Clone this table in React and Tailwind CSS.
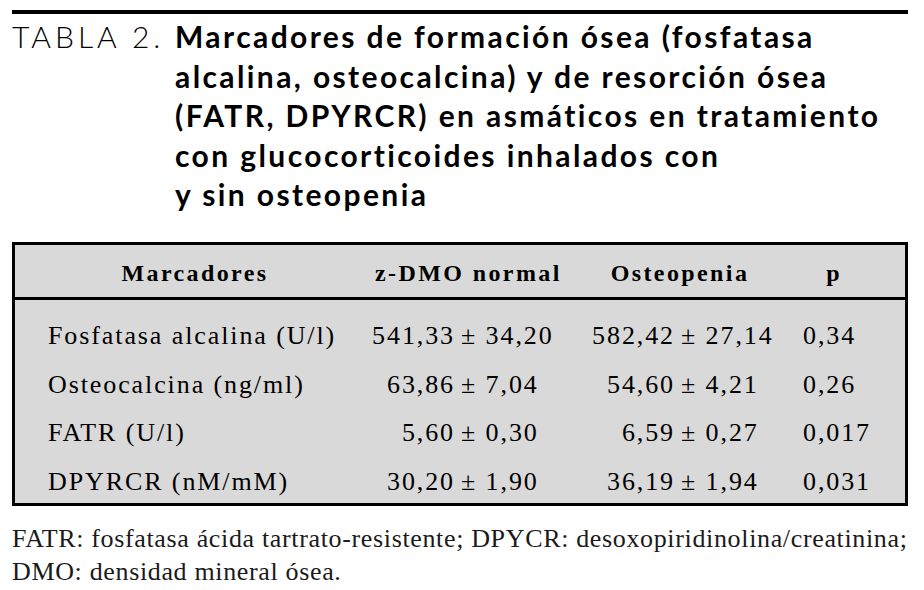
import React from "react";

const rows = [
  { label: "Fosfatasa alcalina (U/l)", a: "541,33", b: "34,20", c: "582,42", d: "27,14", p: "0,34" },
  { label: "Osteocalcina (ng/ml)", a: "63,86", b: "7,04", c: "54,60", d: "4,21", p: "0,26" },
  { label: "FATR (U/l)", a: "5,60", b: "0,30", c: "6,59", d: "0,27", p: "0,017" },
  { label: "DPYRCR (nM/mM)", a: "30,20", b: "1,90", c: "36,19", d: "1,94", p: "0,031" },
];

const serif = "font-['Liberation_Serif','Times_New_Roman',serif]";

const App = () => {
  return (
    <div className="w-[924px] h-[590px] bg-white text-black overflow-hidden">
      {/* top rule */}
      <div className="ml-[12px] mt-[10px] w-[896px] h-[4px] bg-black" />

      {/* title */}
      <div className="flex pl-[12px] pt-[3px] font-['Lato','Open_Sans',sans-serif] text-[30px] leading-[39.5px]">
        <span className="w-[163px] shrink-0 font-light tracking-[4px]">TABLA 2.</span>
        <h1 className="font-bold tracking-[2.4px]">
          Marcadores de formación ósea (fosfatasa
          <br />
          alcalina, osteocalcina) y de resorción ósea
          <br />
          (FATR, DPYRCR) en asmáticos en tratamiento
          <br />
          con glucocorticoides inhalados con
          <br />y sin osteopenia
        </h1>
      </div>

      {/* table */}
      <div className={`ml-[12px] mt-[27px] w-[896px] border-[3px] border-black bg-[#d9d9d9] ${serif}`}>
        <div className="flex items-center h-[55px] border-b-[3px] border-black font-bold text-[24px] tracking-[2.4px] pt-[4px]">
          <div className="w-[360px] text-center">Marcadores</div>
          <div className="w-[170px] text-center whitespace-nowrap">z-DMO normal</div>
          <div className="w-[270px] text-center">Osteopenia</div>
          <div className="w-[38px] text-center">p</div>
        </div>
        <div className="h-[203px] pt-[12px] text-[26px] tracking-[1.9px]">
          {rows.map((r, i) => (
            <div key={i} className="flex items-center h-[48.5px] whitespace-nowrap">
              <div className="w-[440px] pl-[33px] flex justify-between">
                <span>{r.label}</span>
                <span>{r.a}</span>
              </div>
              <div className="ml-[6px] w-[214px] flex justify-between">
                <span>± {r.b}</span>
                <span>{r.c}</span>
              </div>
              <div className="ml-[6px] w-[122px]">± {r.d}</div>
              <div>{r.p}</div>
            </div>
          ))}
        </div>
      </div>

      {/* footnote */}
      <div className={`ml-[12px] mt-[16px] text-[26px] leading-[33px] tracking-[0.65px] text-[#1a1a1a] whitespace-nowrap ${serif}`}>
        <p>FATR: fosfatasa ácida tartrato-resistente; DPYCR: desoxopiridinolina/creatinina;</p>
        <p>DMO: densidad mineral ósea.</p>
      </div>
    </div>
  );
};

export default App;
